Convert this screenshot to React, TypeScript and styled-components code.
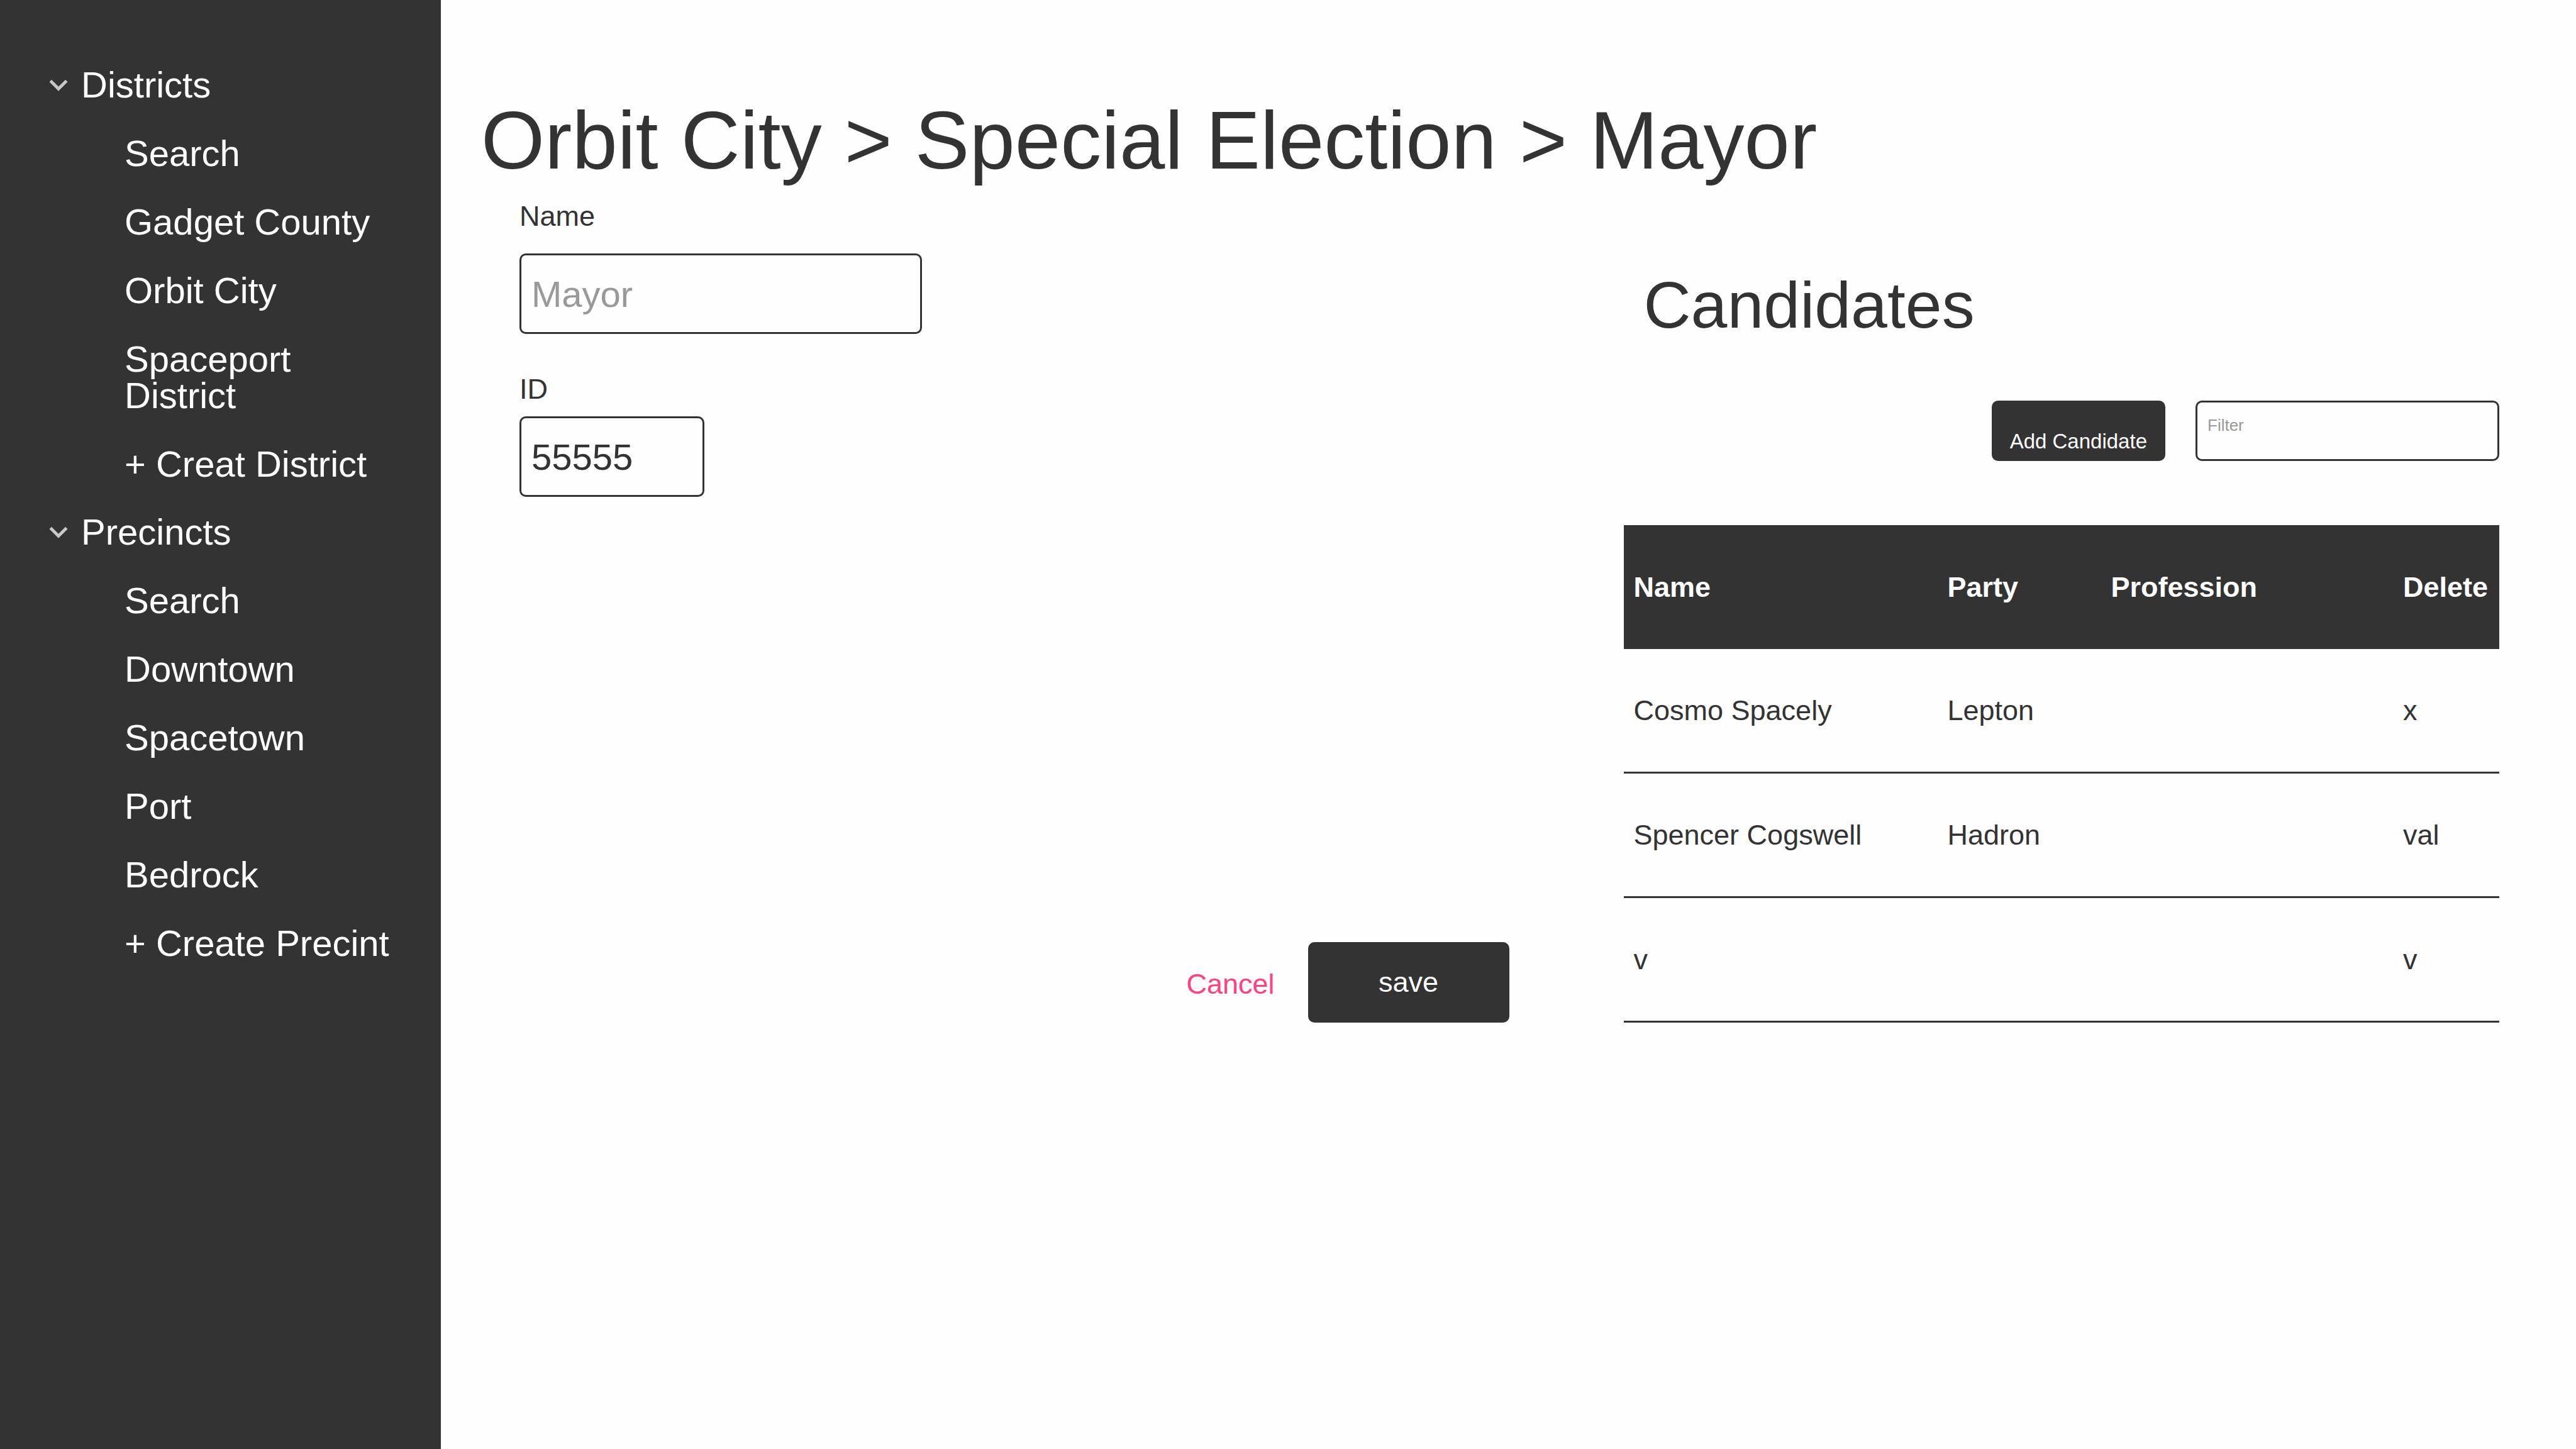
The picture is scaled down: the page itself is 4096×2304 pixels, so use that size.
import React from "react";
import styled, { createGlobalStyle } from "styled-components";

const ink = "#333333";
const paper = "#fefefe";
const muted = "#999999";
const accent = "#ff4081";

const GlobalStyle = createGlobalStyle`
  *, *::before, *::after { box-sizing: border-box; }
  body {
    margin: 0;
    background: ${paper};
    color: ${ink};
    font-family: "Liberation Sans", Arial, sans-serif;
    font-size: 45px;
    line-height: 1;
  }
  input, button { font-family: inherit; color: inherit; }
`;

const Page = styled.div`
  display: flex;
  min-height: 100vh;
`;

const Sidebar = styled.nav`
  flex: 0 0 701px;
  padding: 106px 64px;
  background: ${ink};
  color: #ffffff;
  font-size: 58px;
  line-height: 58px;
`;

const Group = styled.section`
  & + & { margin-top: 50px; }
`;

const GroupToggle = styled.button`
  display: flex;
  align-items: center;
  gap: 7px;
  padding: 0;
  border: 0;
  background: none;
  font-size: inherit;
  line-height: inherit;
  cursor: pointer;
`;

const Chevron = styled.svg`
  width: 58px;
  height: 58px;
  fill: #c8c8c8;
`;

const GroupItems = styled.ul`
  display: grid;
  gap: 51px;
  margin: 51px 0 0;
  padding: 0 0 0 134px;
  list-style: none;
`;

const NavLink = styled.a`
  display: block;
  color: inherit;
  text-decoration: none;
`;

const Main = styled.main`
  flex: 1;
  min-width: 0;
  padding-top: 158px;
`;

const Title = styled.h1`
  margin: 0;
  padding: 0 64px;
  font-size: 130px;
  font-weight: 400;
  line-height: 130px;
`;

const Columns = styled.div`
  display: grid;
  grid-template-columns: minmax(0, 113fr) minmax(0, 100fr);
  column-gap: 182px;
  padding: 33px 122px 0 125px;
`;

const Form = styled.form`
  display: flex;
  flex-direction: column;
`;

const Field = styled.div<{ $gap: number }>`
  display: flex;
  flex-direction: column;
  align-items: flex-start;
  gap: ${(p) => p.$gap}px;
  & + & { margin-top: 65px; }
`;

const Label = styled.label`
  line-height: 45px;
`;

const TextInput = styled.input<{ $width: number }>`
  width: ${(p) => p.$width}px;
  max-width: 100%;
  height: 128px;
  padding: 0 16px;
  border: 3px solid ${ink};
  border-radius: 10px;
  background: ${paper};
  font-size: 58px;
  &::placeholder { color: ${muted}; opacity: 1; }
`;

const FilterInput = styled(TextInput)`
  height: 96px;
  padding-bottom: 18px;
  font-size: 26px;
`;

const Actions = styled.div`
  display: flex;
  justify-content: flex-end;
  align-items: center;
  gap: 53px;
  margin-top: auto;
`;

const CancelLink = styled.a`
  padding-top: 4px;
  color: ${accent};
  text-decoration: none;
`;

const SolidButton = styled.button`
  border: 0;
  border-radius: 10px;
  background: ${ink};
  color: #ffffff;
  cursor: pointer;
`;

const SaveButton = styled(SolidButton)`
  width: 320px;
  height: 128px;
  font-size: 45px;
`;

const AddButton = styled(SolidButton)`
  height: 96px;
  padding: 34px 29px 0;
  font-size: 33px;
  white-space: nowrap;
`;

const Candidates = styled.section`
  padding-top: 112px;
`;

const SectionTitle = styled.h2`
  margin: 0;
  padding-left: 32px;
  font-size: 104px;
  font-weight: 400;
  line-height: 104px;
`;

const Toolbar = styled.div`
  display: flex;
  justify-content: flex-end;
  gap: 48px;
  margin: 100px 0 102px;
`;

const Table = styled.table`
  width: 100%;
  border-collapse: separate;
  border-spacing: 0;
  table-layout: fixed;
  text-align: left;
`;

const HeadCell = styled.th<{ $width?: number }>`
  width: ${(p) => (p.$width ? `${p.$width}px` : "auto")};
  height: 197px;
  padding: 0 16px;
  background: ${ink};
  color: #ffffff;
`;

const Cell = styled.td`
  height: 198px;
  padding: 0 16px;
  border-bottom: 3px solid ${ink};
`;

const groups = [
  {
    title: "Districts",
    items: ["Search", "Gadget County", "Orbit City", "Spaceport District", "+ Creat District"],
  },
  {
    title: "Precincts",
    items: ["Search", "Downtown", "Spacetown", "Port", "Bedrock", "+ Create Precint"],
  },
];

const columns = [
  { label: "Name", width: 499 },
  { label: "Party", width: 260 },
  { label: "Profession" },
  { label: "Delete", width: 169 },
];

const rows = [
  ["Cosmo Spacely", "Lepton", "", "x"],
  ["Spencer Cogswell", "Hadron", "", "val"],
  ["v", "", "", "v"],
];

export default function App() {
  return (
    <>
      <GlobalStyle />
      <Page>
        <Sidebar>
          {groups.map((group) => (
            <Group key={group.title}>
              <GroupToggle type="button" aria-expanded="true">
                <Chevron viewBox="0 0 24 24" aria-hidden="true">
                  <path d="M16.59 8.59L12 13.17 7.41 8.59 6 10l6 6 6-6z" />
                </Chevron>
                {group.title}
              </GroupToggle>
              <GroupItems>
                {group.items.map((item) => (
                  <li key={item}>
                    <NavLink href="#">{item}</NavLink>
                  </li>
                ))}
              </GroupItems>
            </Group>
          ))}
        </Sidebar>
        <Main>
          <Title>Orbit City &gt; Special Election &gt; Mayor</Title>
          <Columns>
            <Form onSubmit={(e) => e.preventDefault()}>
              <Field $gap={37}>
                <Label htmlFor="office-name">Name</Label>
                <TextInput id="office-name" type="text" placeholder="Mayor" $width={640} />
              </Field>
              <Field $gap={21}>
                <Label htmlFor="office-id">ID</Label>
                <TextInput id="office-id" type="text" defaultValue="55555" $width={294} />
              </Field>
              <Actions>
                <CancelLink href="#">Cancel</CancelLink>
                <SaveButton type="submit">save</SaveButton>
              </Actions>
            </Form>
            <Candidates>
              <SectionTitle>Candidates</SectionTitle>
              <Toolbar>
                <AddButton type="button">Add Candidate</AddButton>
                <FilterInput type="text" placeholder="Filter" aria-label="Filter" $width={483} />
              </Toolbar>
              <Table>
                <thead>
                  <tr>
                    {columns.map((c) => (
                      <HeadCell key={c.label} scope="col" $width={c.width}>
                        {c.label}
                      </HeadCell>
                    ))}
                  </tr>
                </thead>
                <tbody>
                  {rows.map((row) => (
                    <tr key={row[0]}>
                      {row.map((value, i) => (
                        <Cell key={columns[i].label}>{value}</Cell>
                      ))}
                    </tr>
                  ))}
                </tbody>
              </Table>
            </Candidates>
          </Columns>
        </Main>
      </Page>
    </>
  );
}
